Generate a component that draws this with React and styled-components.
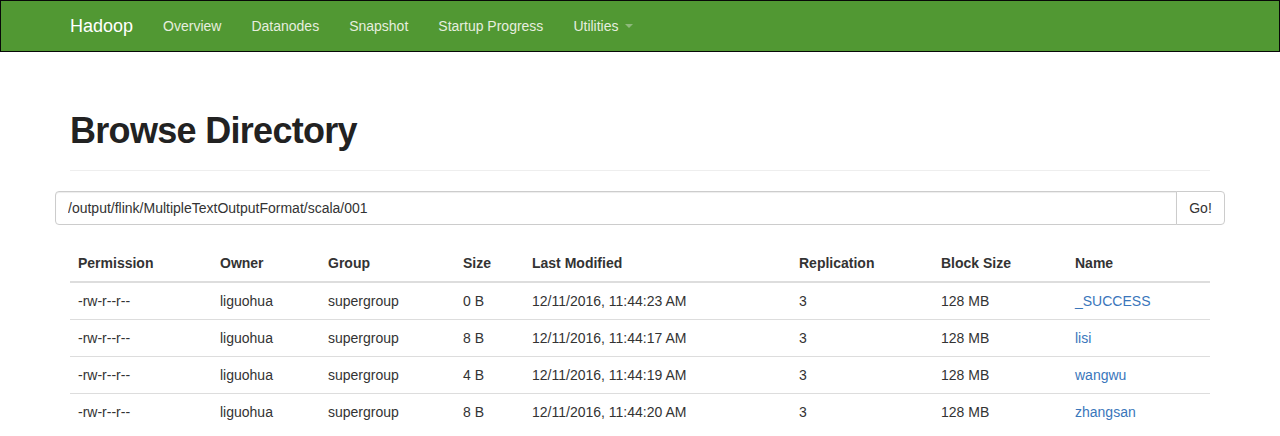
import React from "react";
import styled, { createGlobalStyle } from "styled-components";

const Global = createGlobalStyle`
  html, body { margin: 0; padding: 0; background: #fff; }
  body {
    font-family: "Liberation Sans", Arial, Helvetica, sans-serif;
    font-size: 14px;
    line-height: 1.428571;
    color: #333;
  }
  * { box-sizing: border-box; }
`;

const Navbar = styled.nav`
  height: 52px;
  background: #519833;
  border: 1px solid #080808;
`;

const NavInner = styled.div`
  width: 1170px;
  margin: 0 auto;
  padding: 0 15px;
  display: flex;
  align-items: center;
  height: 50px;
`;

const Brand = styled.a`
  font-size: 18px;
  color: #fff;
  padding: 0 15px 0 0;
  line-height: 50px;
  text-decoration: none;
`;

const NavLink = styled.a`
  color: #e6eedf;
  padding: 0 15px;
  line-height: 50px;
  text-decoration: none;
  display: flex;
  align-items: center;
`;

const Caret = styled.span`
  display: inline-block;
  width: 0;
  height: 0;
  margin-left: 6px;
  border-top: 4px solid #8fb97c;
  border-left: 4px solid transparent;
  border-right: 4px solid transparent;
`;

const Container = styled.div`
  width: 1170px;
  margin: 0 auto;
  padding: 0 15px;
`;

const PageHeader = styled.div`
  margin-top: 59px;
  padding-bottom: 9px;
  border-bottom: 1px solid #eee;
  margin-bottom: 20px;
`;

const Title = styled.h1`
  margin: 0 0 10px;
  font-size: 36px;
  font-weight: 700;
  line-height: 39.6px;
  letter-spacing: -0.7px;
  color: #222;
`;

const InputGroup = styled.div`
  display: flex;
  margin: 0 -15px;
  height: 34px;
`;

const PathInput = styled.input`
  flex: 1;
  height: 34px;
  border: 1px solid #ccc;
  border-radius: 4px 0 0 4px;
  padding: 6px 12px;
  font: 14px "Liberation Sans", Arial, sans-serif;
  color: #333;
  box-shadow: inset 0 1px 1px rgba(0,0,0,0.075);
  outline: none;
`;

const GoButton = styled.button`
  height: 34px;
  width: 49px;
  margin-left: -1px;
  border: 1px solid #ccc;
  border-radius: 0 4px 4px 0;
  background: #fff;
  font: 14px "Liberation Sans", Arial, sans-serif;
  color: #333;
  padding: 0;
`;

const Table = styled.table`
  width: 1140px;
  margin-top: 20px;
  border-collapse: collapse;
  border-spacing: 0;
  table-layout: fixed;
`;

const Th = styled.th`
  text-align: left;
  font-weight: 700;
  padding: 8px;
  line-height: 20px;
  border-bottom: 2px solid #ddd;
  color: #333;
`;

const Td = styled.td`
  padding: 8px;
  line-height: 20px;
  border-top: ${p => (p.$first ? "0" : "1px solid #ddd")};
  color: #333;
`;

const Link = styled.a`
  color: #3a76bb;
  text-decoration: none;
`;

const cols = [142, 108, 135, 69, 267, 142, 134, 143];
const headers = ["Permission", "Owner", "Group", "Size", "Last Modified", "Replication", "Block Size", "Name"];
const rows = [
  ["0 B", "12/11/2016, 11:44:23 AM", "_SUCCESS"],
  ["8 B", "12/11/2016, 11:44:17 AM", "lisi"],
  ["4 B", "12/11/2016, 11:44:19 AM", "wangwu"],
  ["8 B", "12/11/2016, 11:44:20 AM", "zhangsan"],
];

export default function App() {
  return (
    <>
      <Global />
      <Navbar>
        <NavInner>
          <Brand href="#">Hadoop</Brand>
          <NavLink href="#">Overview</NavLink>
          <NavLink href="#">Datanodes</NavLink>
          <NavLink href="#">Snapshot</NavLink>
          <NavLink href="#">Startup Progress</NavLink>
          <NavLink href="#">Utilities<Caret /></NavLink>
        </NavInner>
      </Navbar>
      <Container>
        <PageHeader>
          <Title>Browse Directory</Title>
        </PageHeader>
        <InputGroup>
          <PathInput defaultValue="/output/flink/MultipleTextOutputFormat/scala/001" />
          <GoButton>Go!</GoButton>
        </InputGroup>
        <Table>
          <colgroup>
            {cols.map((w, i) => <col key={i} style={{ width: w }} />)}
          </colgroup>
          <thead>
            <tr>{headers.map(h => <Th key={h}>{h}</Th>)}</tr>
          </thead>
          <tbody>
            {rows.map((r, i) => (
              <tr key={r[2]}>
                <Td $first={i === 0}>-rw-r--r--</Td>
                <Td $first={i === 0}>liguohua</Td>
                <Td $first={i === 0}>supergroup</Td>
                <Td $first={i === 0}>{r[0]}</Td>
                <Td $first={i === 0}>{r[1]}</Td>
                <Td $first={i === 0}>3</Td>
                <Td $first={i === 0}>128 MB</Td>
                <Td $first={i === 0}><Link href="#">{r[2]}</Link></Td>
              </tr>
            ))}
          </tbody>
        </Table>
      </Container>
    </>
  );
}
